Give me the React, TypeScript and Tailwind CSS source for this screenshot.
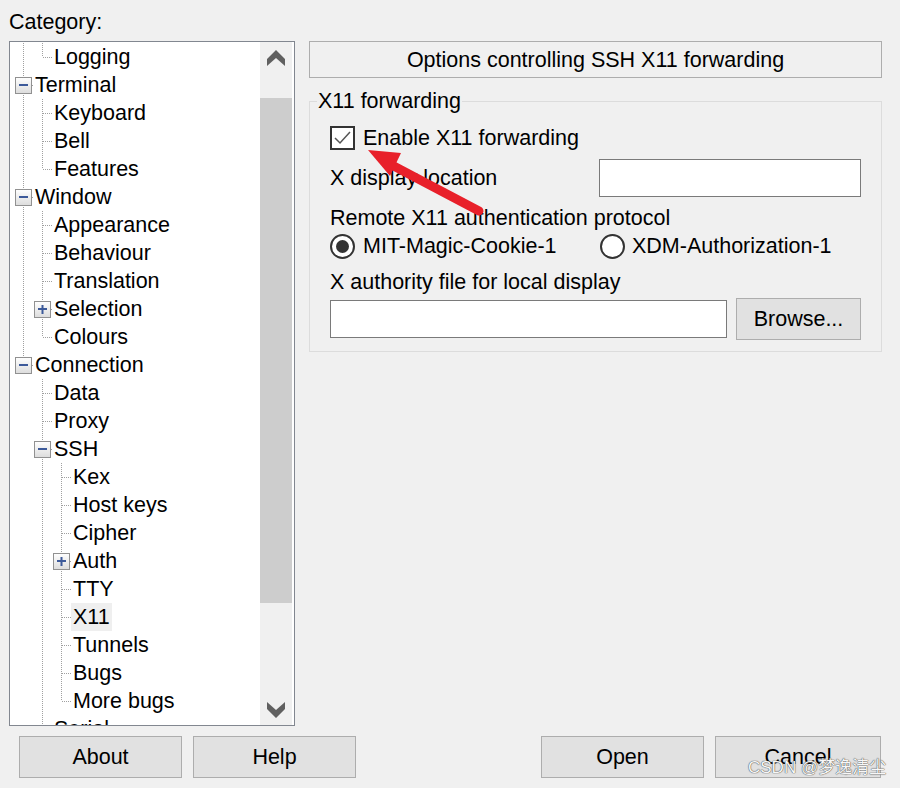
import clsx from 'clsx';

type TreeRowData = {
  label: string;
  guides: boolean[];
  last?: boolean;
  expander?: 'minus' | 'plus';
  selected?: boolean;
};

const treeRows: TreeRowData[] = [
  { label: 'Logging', guides: [true], last: true },
  { label: 'Terminal', guides: [], expander: 'minus' },
  { label: 'Keyboard', guides: [true] },
  { label: 'Bell', guides: [true] },
  { label: 'Features', guides: [true], last: true },
  { label: 'Window', guides: [], expander: 'minus' },
  { label: 'Appearance', guides: [true] },
  { label: 'Behaviour', guides: [true] },
  { label: 'Translation', guides: [true] },
  { label: 'Selection', guides: [true], expander: 'plus' },
  { label: 'Colours', guides: [true], last: true },
  { label: 'Connection', guides: [], expander: 'minus', last: true },
  { label: 'Data', guides: [false] },
  { label: 'Proxy', guides: [false] },
  { label: 'SSH', guides: [false], expander: 'minus' },
  { label: 'Kex', guides: [false, true] },
  { label: 'Host keys', guides: [false, true] },
  { label: 'Cipher', guides: [false, true] },
  { label: 'Auth', guides: [false, true], expander: 'plus' },
  { label: 'TTY', guides: [false, true] },
  { label: 'X11', guides: [false, true], selected: true },
  { label: 'Tunnels', guides: [false, true] },
  { label: 'Bugs', guides: [false, true] },
  { label: 'More bugs', guides: [false, true], last: true },
  { label: 'Serial', guides: [false], last: true },
];

const DOT = '#a0a0a0';

export default function App() {
  return (
    <div className="relative h-[788px] w-[900px] overflow-hidden bg-[#f0f0f0] font-['Liberation_Sans',Arial,sans-serif] text-[21.5px] text-black">
      <div className="pl-[9px] pt-[10px]">
        <div className="h-[24px] leading-[24px]">Category:</div>

        <div className="mt-[7px] flex gap-[14px]">
          <CategoryTree />
          <OptionsPanel />
        </div>

        <div className="mt-[10px] flex pl-[10px]">
          <DialogButton className="w-[163px]">About</DialogButton>
          <DialogButton className="ml-[11px] w-[163px]">Help</DialogButton>
          <DialogButton className="ml-auto w-[163px]">Open</DialogButton>
          <DialogButton className="ml-[11px] mr-[19px] w-[166px]">Cancel</DialogButton>
        </div>
      </div>

      {/* annotation arrow pointing at the checkbox */}
      <svg className="pointer-events-none absolute left-0 top-0" width="900" height="788">
        <line x1="388" y1="163" x2="479" y2="211" stroke="#e8202a" strokeWidth="9" strokeLinecap="round" />
        <polygon points="368,150 401,153 390,176" fill="#e8202a" />
      </svg>

      <span className="pointer-events-none absolute left-[748px] top-[757px] font-['Liberation_Sans','Noto_Sans_CJK_SC',sans-serif] text-[17px] leading-[22px] text-[#f7f7f7] [text-shadow:0_0_1px_#444,0_0_1px_#444]">
        CSDN @梦逸清尘
      </span>
    </div>
  );
}

function CategoryTree() {
  return (
    <div className="flex h-[685px] w-[286px] border border-[#828790] bg-white">
      <div className="min-w-0 flex-1 overflow-hidden pl-[4px] pt-[1px]">
        {treeRows.map((row) => (
          <TreeRow key={row.label} row={row} />
        ))}
      </div>
      <TreeScrollbar />
    </div>
  );
}

function TreeRow({ row }: { row: TreeRowData }) {
  return (
    <div className="flex h-[28px] items-stretch">
      {row.guides.map((on, index) => (
        <svg key={index} width="19" height="28" className="shrink-0">
          {on && <line x1="9.5" y1="0" x2="9.5" y2="28" stroke={DOT} strokeDasharray="1 1" />}
        </svg>
      ))}
      <svg width="19" height="28" className="shrink-0">
        <line x1="9.5" y1="0" x2="9.5" y2={row.last ? 14 : 28} stroke={DOT} strokeDasharray="1 1" />
        <line x1="10" y1="14.5" x2="19" y2="14.5" stroke={DOT} strokeDasharray="1 1" />
        {row.expander && (
          <>
            <defs>
              <linearGradient id="expander" x1="0" y1="0" x2="0" y2="1">
                <stop offset="0" stopColor="#ffffff" />
                <stop offset="1" stopColor="#dcdcdc" />
              </linearGradient>
            </defs>
            <rect x="1.5" y="6.5" width="16" height="16" fill="url(#expander)" stroke="#919191" />
            <rect x="5" y="13" width="9" height="2" fill="#3d5a9a" />
            {row.expander === 'plus' && <rect x="8.5" y="10" width="2" height="9" fill="#3d5a9a" />}
          </>
        )}
      </svg>
      <span className={clsx('whitespace-nowrap px-[2px] leading-[28px]', row.selected && 'bg-[#efefef]')}>
        {row.label}
      </span>
    </div>
  );
}

function TreeScrollbar() {
  return (
    <div className="mr-[2px] flex w-[32px] flex-col bg-[#f0f0f0] pt-[1px]">
      <div className="flex h-[55px] justify-center pt-[7px]">
        <svg width="18" height="17">
          <polygon points="9,0 18,9 18,16 9,8 0,16 0,9" fill="#606060" />
        </svg>
      </div>
      <div className="h-[505px] bg-[#cdcdcd]" />
      <div className="flex flex-1 items-end justify-center pb-[6px]">
        <svg width="18" height="17">
          <polygon points="0,0 9,8 18,0 18,7 9,16 0,7" fill="#606060" />
        </svg>
      </div>
    </div>
  );
}

function OptionsPanel() {
  return (
    <div className="w-[573px]">
      <div className="flex h-[37px] items-center justify-center border border-[#adadad] leading-[24px]">
        Options controlling SSH X11 forwarding
      </div>

      <fieldset className="mt-[11px] border border-[#dcdcdc] px-[7px] pb-[12px]">
        <legend className="px-[1px] leading-[24px]">X11 forwarding</legend>
        <div className="pl-[13px] pr-[13px]">
          <div className="mt-[12px] flex h-[26px] items-center">
            <Checkbox />
            <span className="ml-[8px] leading-[24px]">Enable X11 forwarding</span>
          </div>

          <div className="mt-[8px] flex h-[38px] items-center">
            <span className="leading-[24px]">X display location</span>
            <TextBox className="ml-auto w-[262px]" />
          </div>

          <div className="mt-[9px] leading-[24px]">Remote X11 authentication protocol</div>

          <div className="mt-[3px] flex h-[26px] items-center">
            <div className="flex w-[270px] items-center">
              <Radio checked />
              <span className="ml-[8px] leading-[24px]">MIT-Magic-Cookie-1</span>
            </div>
            <div className="flex items-center">
              <Radio />
              <span className="ml-[7px] leading-[24px]">XDM-Authorization-1</span>
            </div>
          </div>

          <div className="mt-[11px] leading-[24px]">X authority file for local display</div>

          <div className="mt-[4px] flex h-[41px] items-center">
            <TextBox className="w-[397px]" />
            <DialogButton className="ml-[9px] h-[41px] w-[125px]">Browse...</DialogButton>
          </div>
        </div>
      </fieldset>
    </div>
  );
}

function Checkbox() {
  return (
    <div className="flex h-[24px] w-[25px] shrink-0 items-center justify-center border-2 border-[#333333] bg-white">
      <svg width="21" height="20">
        <polyline points="3,10 8,15 18,4" fill="none" stroke="#555555" strokeWidth="1.5" />
      </svg>
    </div>
  );
}

function Radio({ checked = false }: { checked?: boolean }) {
  return (
    <div className="flex h-[25px] w-[25px] shrink-0 items-center justify-center rounded-full border-2 border-[#333333] bg-white">
      {checked && <div className="h-[13px] w-[13px] rounded-full bg-[#333333]" />}
    </div>
  );
}

function TextBox({ className }: { className?: string }) {
  return <div className={clsx('h-[38px] border border-[#7a7a7a] bg-white', className)} />;
}

function DialogButton({ className, children }: { className?: string; children: React.ReactNode }) {
  return (
    <div
      className={clsx(
        'flex h-[42px] shrink-0 items-center justify-center border border-[#adadad] bg-[#e1e1e1] leading-[24px]',
        className,
      )}
    >
      {children}
    </div>
  );
}
